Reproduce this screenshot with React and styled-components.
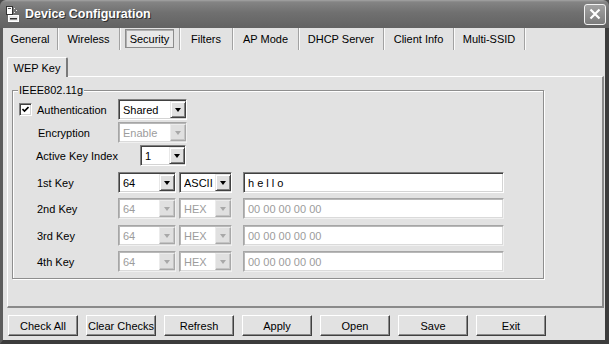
import React from "react";
import styled, { createGlobalStyle } from "styled-components";

const GlobalStyle = createGlobalStyle`
  html, body {
    margin: 0;
    padding: 0;
    background: #4a4a4a;
  }
  body {
    font-family: "Liberation Sans", Arial, sans-serif;
    font-size: 11px;
    color: #000;
  }
`;

const Frame = styled.div`
  width: 609px;
  height: 344px;
  display: flex;
  flex-direction: column;
  overflow: hidden;
`;

const TitleBar = styled.div`
  height: 28px;
  flex: none;
  display: flex;
  align-items: center;
  padding: 0 3px 0 6px;
  border-radius: 6px 6px 0 0;
  background: linear-gradient(#a4a4a4 0, #848484 2px, #707070 45%, #626262 100%);
`;

const TitleText = styled.div`
  margin-left: 6px;
  font-size: 12.5px;
  font-weight: bold;
  color: #fff;
  text-shadow: 1px 1px 0 #2e2e2e;
  flex: 1;
`;

const CloseBtn = styled.div`
  width: 20px;
  height: 19px;
  border: 1px solid #f2f2f2;
  border-radius: 3px;
  display: flex;
  align-items: center;
  justify-content: center;
  background: linear-gradient(#a2a2a2, #7c7c7c);
`;

const Client = styled.div`
  flex: 1;
  display: flex;
  flex-direction: column;
  background: #e2e2e2;
  border-left: 3px solid #5c5c5c;
  border-right: 4px solid #3c3c3c;
  border-bottom: 4px solid #3c3c3c;
`;

const TabBar = styled.div`
  height: 22px;
  flex: none;
  display: flex;
`;

const Tab = styled.div`
  width: ${p => p.$w}px;
  height: 22px;
  box-sizing: border-box;
  display: flex;
  align-items: center;
  justify-content: center;
  border-right: 1px solid #a2a2a2;
  box-shadow: 1px 0 0 #fbfbfb;
`;

const TabLabel = styled.span`
  height: 19px;
  padding: 0 5px;
  display: flex;
  align-items: center;
  box-sizing: border-box;
  margin-top: -1px;
  ${p => p.$active && `
    width: 49px;
    justify-content: center;
    border: 1px solid #8c8c8c;
    box-shadow: inset 1px 1px 0 #b0b0b0;
    background: #e8e8e8;
  `}
`;

const Body = styled.div`
  flex: 1;
  display: flex;
  flex-direction: column;
  padding: 7px 1px 0 4px;
`;

const SubTabs = styled.div`
  display: flex;
  height: 19px;
  position: relative;
  z-index: 1;
`;

const SubTab = styled.div`
  width: 61px;
  height: 20px;
  box-sizing: border-box;
  display: flex;
  align-items: center;
  justify-content: center;
  background: #e2e2e2;
  border-top: 1px solid #fff;
  border-left: 1px solid #fff;
  border-right: 2px solid #7a7a7a;
  border-radius: 2px 2px 0 0;
  padding-top: 1px;
`;

const Page = styled.div`
  height: 232px;
  box-sizing: border-box;
  border-top: 1px solid #fff;
  border-left: 1px solid #fff;
  border-right: 2px solid #8a8a8a;
  border-bottom: 2px solid #8a8a8a;
  padding: 0 0 0 4px;
`;

const Group = styled.fieldset`
  width: 532px;
  height: 195px;
  box-sizing: border-box;
  margin: 7px 0 0 0;
  padding: 0;
  border: 1px solid #8e8e8e;
  box-shadow: 1px 1px 0 #fff, inset 1px 1px 0 #fff;
  display: flex;
  flex-direction: column;
`;

const Legend = styled.legend`
  margin-left: 5px;
  padding: 0 1px;
  font-size: 11px;
  line-height: 13px;
  background: #e2e2e2;
`;

const Row = styled.div`
  display: flex;
  align-items: center;
  height: 21px;
  margin-top: ${p => p.$top}px;
  padding-left: ${p => p.$indent}px;
`;

const Label = styled.div`
  width: ${p => p.$w}px;
  flex: none;
`;

const CheckBox = styled.div`
  width: 13px;
  height: 13px;
  box-sizing: border-box;
  margin-right: 5px;
  background: #fff;
  border: 1px solid;
  border-color: #808080 #fff #fff #808080;
  box-shadow: inset 1px 1px 0 #404040, inset -1px -1px 0 #d4d4d4;
  display: flex;
  align-items: center;
  justify-content: center;
`;

const Sunken = styled.div`
  width: ${p => p.$w}px;
  height: 21px;
  flex: none;
  box-sizing: border-box;
  display: flex;
  align-items: center;
  margin-left: ${p => p.$gap || 0}px;
  padding: 2px 2px 2px 4px;
  background: #fff;
  border: 1px solid;
  border-color: ${p => (p.$off ? "#a6a6a6 #f0f0f0 #f0f0f0 #a6a6a6" : "#808080 #fff #fff #808080")};
  box-shadow: ${p =>
    p.$off ? "inset 1px 1px 0 #b8b8b8, inset -1px -1px 0 #dadada" : "inset 1px 1px 0 #404040, inset -1px -1px 0 #d4d4d4"};
  color: ${p => (p.$off ? "#9c9c9c" : "#000")};
  white-space: pre;
`;

const Value = styled.span`
  flex: 1;
  overflow: hidden;
`;

const DropBtn = styled.div`
  width: 16px;
  height: 17px;
  box-sizing: border-box;
  margin-right: -2px;
  flex: none;
  display: flex;
  align-items: center;
  justify-content: center;
  background: #e0e0e0;
  border: 1px solid;
  border-color: ${p => (p.$off ? "#ececec #a8a8a8 #a8a8a8 #ececec" : "#e8e8e8 #404040 #404040 #e8e8e8")};
  box-shadow: ${p => (p.$off ? "inset -1px -1px 0 #c4c4c4" : "inset 1px 1px 0 #fff, inset -1px -1px 0 #808080")};
`;

const Arrow = styled.span`
  width: 0;
  height: 0;
  border-left: 3.5px solid transparent;
  border-right: 3.5px solid transparent;
  border-top: 4px solid ${p => (p.$off ? "#a8a8a8" : "#000")};
  margin-top: 1px;
`;

const ButtonRow = styled.div`
  display: flex;
  gap: 8px;
  padding: 7px 0 0 1px;
`;

const Btn = styled.button`
  width: 70px;
  height: 21px;
  box-sizing: border-box;
  margin: 0;
  padding: 0;
  font-family: "Liberation Sans", Arial, sans-serif;
  font-size: 11px;
  color: #000;
  white-space: nowrap;
  background: #e2e2e2;
  border: 1px solid;
  border-color: #fff #404040 #404040 #fff;
  box-shadow: inset -1px -1px 0 #8a8a8a;
`;

const Combo = ({ w, gap, value, off }) => (
  <Sunken $w={w} $gap={gap} $off={off}>
    <Value>{value}</Value>
    <DropBtn $off={off}>
      <Arrow $off={off} />
    </DropBtn>
  </Sunken>
);

const AppIcon = () => (
  <svg width="13" height="16" viewBox="0 0 13 16">
    <rect x="0.5" y="0.5" width="6" height="8" fill="#fff" stroke="#333" />
    <rect x="2" y="2" width="3" height="1" fill="#555" />
    <rect x="8" y="2" width="1" height="1" fill="#eee" />
    <rect x="10" y="4" width="1" height="1" fill="#eee" />
    <rect x="8" y="6" width="1" height="1" fill="#eee" />
    <rect x="2.5" y="9.5" width="10" height="6" fill="#e8e8e8" stroke="#fff" />
    <rect x="4" y="12" width="7" height="1.5" fill="#333" />
  </svg>
);

const tabs = [
  { name: "General", w: 55 },
  { name: "Wireless", w: 62 },
  { name: "Security", w: 60, active: true },
  { name: "Filters", w: 53 },
  { name: "AP Mode", w: 66 },
  { name: "DHCP Server", w: 85 },
  { name: "Client Info", w: 70 },
  { name: "Multi-SSID", w: 71 },
];

const keys = [
  { label: "1st Key", top: 6, len: "64", mode: "ASCII", text: "h e l l o" },
  { label: "2nd Key", top: 5, len: "64", mode: "HEX", text: "00 00 00 00 00", off: true },
  { label: "3rd Key", top: 6, len: "64", mode: "HEX", text: "00 00 00 00 00", off: true },
  { label: "4th Key", top: 5, len: "64", mode: "HEX", text: "00 00 00 00 00", off: true },
];

const buttons = ["Check All", "Clear Checks", "Refresh", "Apply", "Open", "Save", "Exit"];

export default function App() {
  return (
    <>
      <GlobalStyle />
      <Frame>
        <TitleBar>
          <AppIcon />
          <TitleText>Device Configuration</TitleText>
          <CloseBtn>
            <svg width="12" height="12" viewBox="0 0 12 12">
              <path d="M1.5 1.5 L10.5 10.5 M10.5 1.5 L1.5 10.5" stroke="#fff" strokeWidth="2.2" />
            </svg>
          </CloseBtn>
        </TitleBar>
        <Client>
          <TabBar>
            {tabs.map(t => (
              <Tab key={t.name} $w={t.w}>
                <TabLabel $active={t.active}>{t.name}</TabLabel>
              </Tab>
            ))}
          </TabBar>
          <Body>
            <SubTabs>
              <SubTab>WEP Key</SubTab>
            </SubTabs>
            <Page>
              <Group>
                <Legend>IEEE802.11g</Legend>
                <Row $top={2} $indent={6}>
                  <CheckBox>
                    <svg width="7" height="7" viewBox="0 0 7 7">
                      <path d="M0.5 3 L2.5 5 L6.5 1" stroke="#000" strokeWidth="1.6" fill="none" />
                    </svg>
                  </CheckBox>
                  <Label $w={81}>Authentication</Label>
                  <Combo w={69} value="Shared" />
                </Row>
                <Row $top={2} $indent={25}>
                  <Label $w={80}>Encryption</Label>
                  <Combo w={69} value="Enable" off />
                </Row>
                <Row $top={2} $indent={23}>
                  <Label $w={104}>Active Key Index</Label>
                  <Combo w={46} value="1" />
                </Row>
                {keys.map(k => (
                  <Row key={k.label} $top={k.top} $indent={24}>
                    <Label $w={81}>{k.label}</Label>
                    <Combo w={58} value={k.len} off={k.off} />
                    <Combo w={53} gap={3} value={k.mode} off={k.off} />
                    <Sunken $w={261} $gap={11} $off={k.off}>
                      <Value>{k.text}</Value>
                    </Sunken>
                  </Row>
                ))}
              </Group>
            </Page>
            <ButtonRow>
              {buttons.map(b => (
                <Btn key={b}>{b}</Btn>
              ))}
            </ButtonRow>
          </Body>
        </Client>
      </Frame>
    </>
  );
}
